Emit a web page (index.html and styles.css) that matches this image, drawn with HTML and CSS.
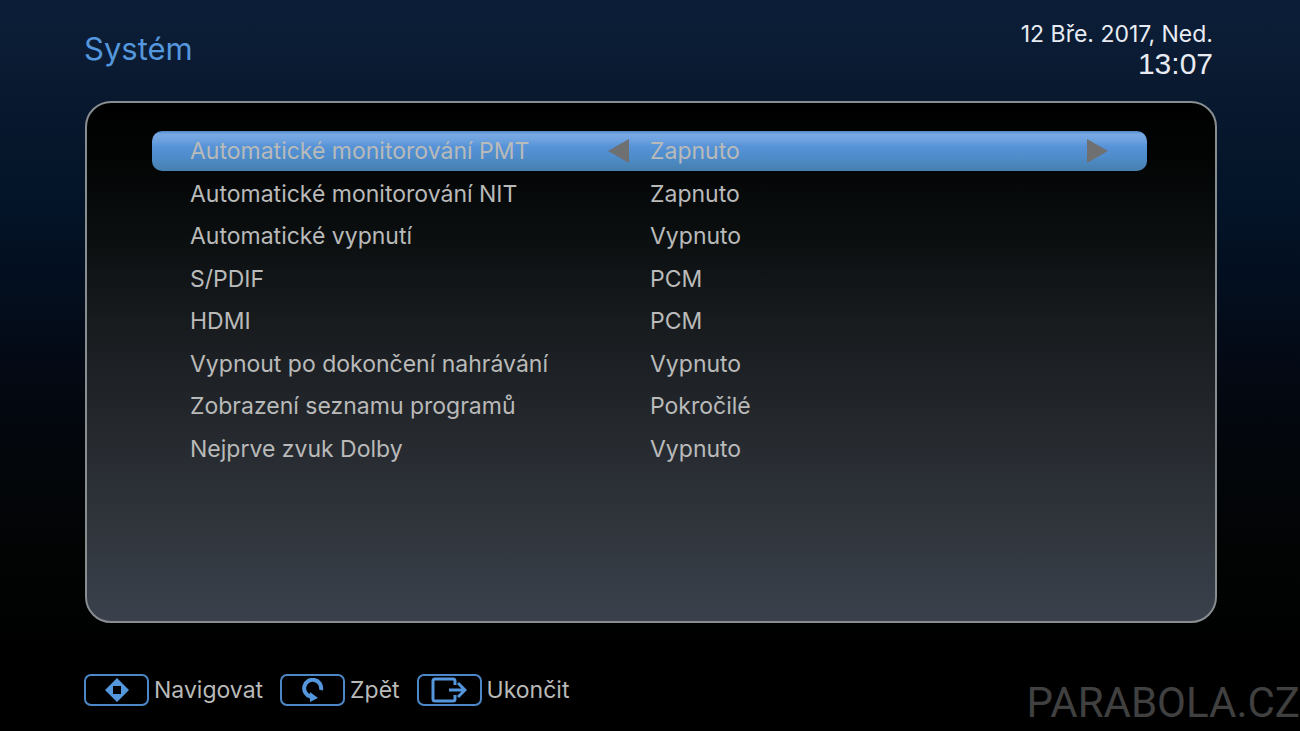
FILE: index.html
```html
<!DOCTYPE html>
<html lang="cs">
<head>
    <meta charset="UTF-8" />
    <meta name="viewport" content="width=device-width, initial-scale=1" />
    <title>Systém</title>
    <link rel="stylesheet" href="styles.css">
</head>
<body>

    <header>
        <h1>Systém</h1>
        <div class="clock">
            <time class="date" datetime="2017-03-12">12 Bře. 2017, Ned.</time>
            <time class="time" datetime="13:07">13:07</time>
        </div>
    </header>

    <main>
        <ul class="settings">
            <li class="setting active">
                <span class="name">Automatické monitorování PMT</span>
                <button type="button" class="arrow" aria-label="Předchozí">
                    <svg width="21" height="24" viewBox="0 0 21 24"><path d="M21 0v24L0 12z" /></svg>
                </button>
                <span class="value">Zapnuto</span>
                <button type="button" class="arrow" aria-label="Další">
                    <svg width="21" height="24" viewBox="0 0 21 24"><path d="M0 0v24l21-12z" /></svg>
                </button>
            </li>
            <li class="setting">
                <span class="name">Automatické monitorování NIT</span>
                <span class="value">Zapnuto</span>
            </li>
            <li class="setting">
                <span class="name">Automatické vypnutí</span>
                <span class="value">Vypnuto</span>
            </li>
            <li class="setting">
                <span class="name">S/PDIF</span>
                <span class="value">PCM</span>
            </li>
            <li class="setting">
                <span class="name">HDMI</span>
                <span class="value">PCM</span>
            </li>
            <li class="setting">
                <span class="name">Vypnout po dokončení nahrávání</span>
                <span class="value">Vypnuto</span>
            </li>
            <li class="setting">
                <span class="name">Zobrazení seznamu programů</span>
                <span class="value">Pokročilé</span>
            </li>
            <li class="setting">
                <span class="name">Nejprve zvuk Dolby</span>
                <span class="value">Vypnuto</span>
            </li>
        </ul>
    </main>

    <footer>
        <button type="button" class="hint">
            <span class="key">
                <svg width="24" height="24" viewBox="0 0 24 24">
                    <path class="solid" fill-rule="evenodd" d="M12 0l12 12-12 12L0 12zM8 8v8h8V8z" />
                </svg>
            </span>
            Navigovat
        </button>
        <button type="button" class="hint">
            <span class="key">
                <svg width="24" height="24" viewBox="0 0 24 24">
                    <path class="line thick" d="M20 12A8.500 8.500 0 1 0 9.500 18.500" />
                    <path class="solid" d="M9 14l8 6-8 4z" />
                </svg>
            </span>
            Zpět
        </button>
        <button type="button" class="hint">
            <span class="key">
                <svg width="36" height="26" viewBox="0 0 36 26">
                    <path class="line" d="M24 8V4q0-2-2-2H4Q2 2 2 4v18q0 2 2 2h18q2 0 2-2v-4M18 13h16M27 6l7 7-7 7" />
                </svg>
            </span>
            Ukončit
        </button>
    </footer>

    <div class="watermark">PARABOLA.CZ</div>

</body>
</html>
```
FILE: styles.css
```css
* {
    box-sizing: border-box;
}

body {
    display: flex;
    flex-direction: column;
    min-height: 100vh;
    margin: 0;
    padding: 0 84px 25px;
    font-family: 'Inter', 'Liberation Sans', Arial, sans-serif;
    font-size: 23px;
    line-height: 30px;
    color: #b9bab9;
    background: linear-gradient(#0c1d38 0%, #091a30 12%, #04152a 25%, #030f20 38%, #040a16 48%, #03060c 60%, #020404 75%, #000 90%) #000;
}

header {
    display: flex;
    justify-content: space-between;
    padding: 19px 3px 22px 0;
}

h1 {
    margin: 10px 0 0;
    font-size: 31px;
    line-height: 40px;
    font-weight: normal;
    color: #5597dc;
}

.clock {
    display: flex;
    flex-direction: column;
    text-align: right;
    color: #e8ecf2;
}

.time {
    font-family: 'Liberation Sans', Arial, sans-serif;
    font-size: 30px;
}

main {
    flex: 1;
    margin: 0 -1px 0 1px;
    padding: 28px 68px 28px 65px;
    border: 2px solid #888d90;
    border-radius: 26px;
    background: linear-gradient(#000 0%, #020404 10%, #0b0e0f 25%, #171b1e 42%, #24282d 62%, #30353c 82%, #3a414c 100%);
}

.settings {
    display: flex;
    flex-direction: column;
    justify-content: space-between;
    min-height: 338px;
    margin: 0;
    padding: 0;
    list-style: none;
}

.setting {
    display: grid;
    grid-template-columns: 418px 42px 1fr 60px;
    align-items: center;
    height: 40px;
    padding-left: 38px;
}

.active {
    border-radius: 10px;
    background: linear-gradient(#4f88c8 0%, #79a9e3 8%, #6ba0de 25%, #5793d8 38%, #4e8cca 65%, #4780ae 100%);
}

.value {
    grid-column: 3;
}

.arrow {
    display: flex;
    padding: 0;
    border: none;
    background: none;
    cursor: pointer;
}

.arrow svg {
    fill: #6f7072;
}

footer {
    display: flex;
    gap: 17px;
    margin-top: 51px;
}

.hint {
    display: flex;
    align-items: center;
    gap: 5px;
    padding: 0;
    border: none;
    background: none;
    font: inherit;
    color: inherit;
    cursor: pointer;
}

.key {
    display: flex;
    align-items: center;
    justify-content: center;
    width: 65px;
    height: 32px;
    border: 2px solid #4c88c8;
    border-radius: 7px;
}

.solid {
    fill: #5597dc;
}

.line {
    fill: none;
    stroke: #5597dc;
    stroke-width: 3;
}

.thick {
    stroke-width: 4;
}

.watermark {
    position: absolute;
    right: 0;
    bottom: 0;
    font-family: 'Arial Narrow', Roboto, 'Liberation Sans', sans-serif;
    font-size: 42px;
    line-height: 56px;
    color: #404040;
}
```
